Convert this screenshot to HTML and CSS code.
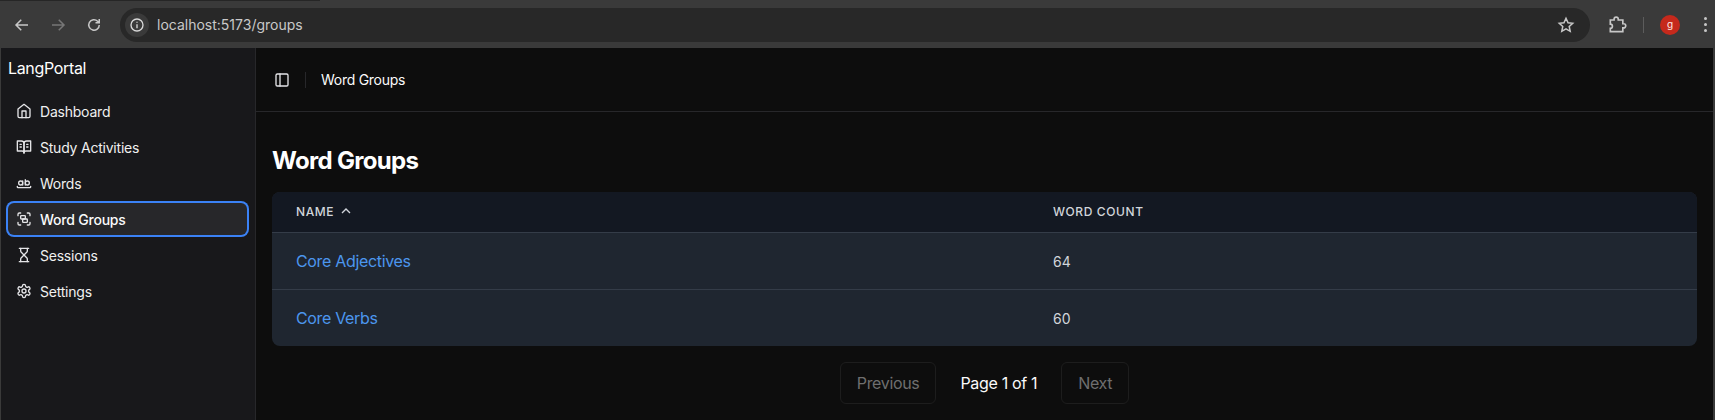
FILE: index.html
```html
<!DOCTYPE html>
<html lang="en">
<head>
    <meta charset="UTF-8">
    <meta name="viewport" content="width=device-width, initial-scale=1.0">
    <title>LangPortal - Word Groups</title>
    <link rel="stylesheet" href="styles.css">
</head>
<body>
    <div class="tab-edge"></div>
    <div class="toolbar">
        <svg class="tool-icon" viewBox="0 0 24 24"><path d="M20 12H5M11 5l-7 7 7 7"/></svg>
        <svg class="tool-icon tool-off" viewBox="0 0 24 24"><path d="M4 12h15M13 5l7 7-7 7"/></svg>
        <svg class="tool-icon" viewBox="0 0 24 24"><path d="M19 12a7 7 0 1 1-2.2-5.1L19 9M19 4v5h-5"/></svg>
        <div class="address">
            <span class="site-info">
                <svg viewBox="0 0 24 24"><circle cx="12" cy="12" r="9"/><path d="M12 11v6M12 7v1.5"/></svg>
            </span>
            <span class="url">localhost:5173/groups</span>
            <svg class="star" viewBox="0 0 24 24"><path d="M12 3l2.7 6 6.3.7-4.7 4.3 1.3 6.5L12 17.200 6.400 20.500 7.700 14 3 9.700 9.300 9z"/></svg>
        </div>
        <svg class="ext" viewBox="0 0 24 24"><path d="M4 6h4.500V5a2.500 2.500 0 0 1 5 0v1H19v4.500h1a2.500 2.500 0 0 1 0 5h-1V20H4v-4a2.500 2.500 0 0 0 0-5z"/></svg>
        <span class="tool-divider"></span>
        <span class="avatar">g</span>
        <span class="kebab"><i></i><i></i><i></i></span>
    </div>

    <div class="app">
        <aside class="sidebar">
            <div class="brand">LangPortal</div>
            <nav class="nav">
                <a class="nav-item">
                    <svg class="icon" viewBox="0 0 24 24"><path d="m3 9 9-7 9 7v11a2 2 0 0 1-2 2H5a2 2 0 0 1-2-2z"/><path d="M9 22V12h6v10"/></svg>
                    Dashboard
                </a>
                <a class="nav-item">
                    <svg class="icon" viewBox="0 0 24 24"><path d="M2 3h6a4 4 0 0 1 4 4v14a3 3 0 0 0-3-3H2z"/><path d="M22 3h-6a4 4 0 0 0-4 4v14a3 3 0 0 1 3-3h7z"/><path d="M6 8h2M6 12h2M16 8h2M16 12h2"/></svg>
                    Study Activities
                </a>
                <a class="nav-item">
                    <svg class="icon" viewBox="0 0 24 24"><circle cx="7" cy="12" r="3"/><path d="M10 9v6"/><circle cx="17" cy="12" r="3"/><path d="M14 7v8"/><path d="M22 17v1c0 .5-.5 1-1 1H3c-.5 0-1-.5-1-1v-1"/></svg>
                    Words
                </a>
                <a class="nav-item active">
                    <svg class="icon" viewBox="0 0 24 24"><path d="M3 7V5c0-1.100.9-2 2-2h2M17 3h2c1.100 0 2 .9 2 2v2M21 17v2c0 1.100-.9 2-2 2h-2M7 21H5c-1.100 0-2-.9-2-2v-2"/><rect width="7" height="5" x="7" y="7" rx="1"/><rect width="7" height="5" x="10" y="12" rx="1"/></svg>
                    Word Groups
                </a>
                <a class="nav-item">
                    <svg class="icon" viewBox="0 0 24 24"><path d="M5 22h14M5 2h14"/><path d="M17 22v-4.172a2 2 0 0 0-.586-1.414L12 12l-4.414 4.414A2 2 0 0 0 7 17.828V22"/><path d="M7 2v4.172a2 2 0 0 0 .586 1.414L12 12l4.414-4.414A2 2 0 0 0 17 6.172V2"/></svg>
                    Sessions
                </a>
                <a class="nav-item">
                    <svg class="icon" viewBox="0 0 24 24"><path d="M12.220 2h-.44a2 2 0 0 0-2 2v.18a2 2 0 0 1-1 1.730l-.43.25a2 2 0 0 1-2 0l-.15-.08a2 2 0 0 0-2.730.73l-.22.38a2 2 0 0 0 .73 2.730l.15.1a2 2 0 0 1 1 1.720v.51a2 2 0 0 1-1 1.740l-.15.09a2 2 0 0 0-.73 2.730l.22.38a2 2 0 0 0 2.730.73l.15-.08a2 2 0 0 1 2 0l.43.25a2 2 0 0 1 1 1.730V20a2 2 0 0 0 2 2h.44a2 2 0 0 0 2-2v-.18a2 2 0 0 1 1-1.730l.43-.25a2 2 0 0 1 2 0l.15.08a2 2 0 0 0 2.730-.73l.22-.39a2 2 0 0 0-.73-2.730l-.15-.08a2 2 0 0 1-1-1.740v-.5a2 2 0 0 1 1-1.740l.15-.09a2 2 0 0 0 .73-2.730l-.22-.38a2 2 0 0 0-2.730-.73l-.15.08a2 2 0 0 1-2 0l-.43-.25a2 2 0 0 1-1-1.730V4a2 2 0 0 0-2-2z"/><circle cx="12" cy="12" r="3"/></svg>
                    Settings
                </a>
            </nav>
        </aside>

        <div class="content">
            <header class="topbar">
                <svg class="icon" viewBox="0 0 24 24"><rect width="18" height="18" x="3" y="3" rx="2"/><path d="M9 3v18"/></svg>
                <span class="topbar-sep"></span>
                <span class="crumb">Word Groups</span>
            </header>
            <main class="main">
                <h1>Word Groups</h1>
                <div class="table-wrap">
                    <table>
                        <thead>
                            <tr>
                                <th class="col-name">
                                    <span class="th-inner">Name
                                        <svg viewBox="0 0 24 24"><path d="m18 15-6-6-6 6"/></svg>
                                    </span>
                                </th>
                                <th>Word Count</th>
                            </tr>
                        </thead>
                        <tbody>
                            <tr>
                                <td><a class="group-link">Core Adjectives</a></td>
                                <td>64</td>
                            </tr>
                            <tr>
                                <td><a class="group-link">Core Verbs</a></td>
                                <td>60</td>
                            </tr>
                        </tbody>
                    </table>
                </div>
                <div class="pager">
                    <button disabled>Previous</button>
                    <span class="page-label">Page 1 of 1</span>
                    <button disabled>Next</button>
                </div>
            </main>
        </div>
    </div>
</body>
</html>
```

FILE: styles.css
```css
* { box-sizing: border-box; }
html, body { height: 100%; }
body {
    margin: 0;
    overflow: hidden;
    font-family: Inter, "Noto Sans", sans-serif;
    background: #3a3a3a;
    color: #fff;
    -webkit-font-smoothing: antialiased;
}

/* browser chrome */
.tab-edge {
    height: 1px;
    width: 320px;
    background: #262626;
}
.toolbar {
    height: 47px;
    display: flex;
    align-items: center;
    padding: 0 0 0 13px;
    background: #3a3a3a;
}
.tool-icon {
    width: 18px;
    height: 18px;
    margin-right: 18px;
    fill: none;
    stroke: #c7c7c7;
    stroke-width: 2;
}
.tool-off { stroke: #777; }
.address {
    width: 1470px;
    height: 34px;
    margin-left: -1px;
    padding: 0 15px 0 5px;
    display: flex;
    align-items: center;
    background: #282828;
    border-radius: 17px;
}
.site-info {
    width: 24px;
    height: 24px;
    display: flex;
    align-items: center;
    justify-content: center;
    background: #3a3a3a;
    border-radius: 50%;
}
.site-info svg {
    width: 16px;
    height: 16px;
    fill: none;
    stroke: #d8d8d8;
    stroke-width: 2;
}
.url {
    margin-left: 8px;
    flex: 1;
    font-size: 14px;
    color: #c9c9c9;
}
.star {
    width: 18px;
    height: 18px;
    fill: none;
    stroke: #c7c7c7;
    stroke-width: 2;
}
.ext {
    width: 20px;
    height: 20px;
    margin-left: 17px;
    fill: none;
    stroke: #c7c7c7;
    stroke-width: 2;
}
.tool-divider {
    width: 1px;
    height: 16px;
    margin-left: 16px;
    background: #5c5c5c;
}
.avatar {
    width: 20px;
    height: 20px;
    margin-left: 16px;
    border-radius: 50%;
    background: #c5291c;
    color: #ffe9e4;
    font-size: 10px;
    line-height: 18px;
    text-align: center;
}
.kebab {
    margin-left: 24px;
    display: flex;
    flex-direction: column;
    gap: 3px;
}
.kebab i {
    width: 3px;
    height: 3px;
    border-radius: 50%;
    background: #c7c7c7;
}

/* app shell */
.app {
    height: 372px;
    margin: 0 2px 0 1px;
    display: flex;
    overflow: hidden;
    background: #0d0d0d;
}
.sidebar {
    width: 255px;
    flex-shrink: 0;
    padding: 8px 8px 8px 7px;
    background: #18181b;
    border-right: 1px solid #27272a;
}
.brand {
    font-size: 16px;
    line-height: 24px;
    font-weight: 400;
    letter-spacing: -0.33px;
}
.nav {
    margin-top: 15px;
    display: flex;
    flex-direction: column;
    gap: 4px;
}
.nav-item {
    height: 32px;
    padding-left: 8px;
    display: flex;
    align-items: center;
    gap: 8px;
    font-size: 14px;
    letter-spacing: -0.22px;
    color: #f0f0f0;
    border-radius: 6px;
}
.nav-item.active {
    background: #27272a;
    font-weight: 500;
    color: #fafafa;
    box-shadow: 0 0 0 2px #3b82f6;
}
.icon {
    width: 16px;
    height: 16px;
    flex-shrink: 0;
    fill: none;
    stroke: #e4e4e7;
    stroke-width: 2;
    stroke-linecap: round;
    stroke-linejoin: round;
}

/* main column */
.content {
    flex: 1;
    min-width: 0;
}
.topbar {
    height: 64px;
    padding-left: 18px;
    display: flex;
    align-items: center;
    border-bottom: 1px solid #27272a;
}
.topbar-sep {
    width: 1px;
    height: 16px;
    margin: 0 15px 0 15px;
    background: #27272a;
}
.crumb {
    font-size: 14px;
    letter-spacing: -0.27px;
    color: #fafafa;
}
.main { padding: 33px 16px 0; }
h1 {
    margin: 0 0 15px;
    font-size: 24px;
    line-height: 32px;
    font-weight: 700;
    letter-spacing: -0.7px;
}
.table-wrap {
    border-radius: 8px;
    overflow: hidden;
    background: #1f2630;
}
table {
    width: 100%;
    table-layout: fixed;
    border-collapse: separate;
    border-spacing: 0;
}
th {
    height: 41px;
    padding: 0 24px 2px;
    text-align: left;
    font-size: 12px;
    font-weight: 500;
    letter-spacing: 0.05em;
    text-transform: uppercase;
    color: #d1d5db;
    background: #131822;
    border-bottom: 1px solid #343c48;
}
.col-name { width: 757px; }
.th-inner {
    display: flex;
    align-items: center;
    gap: 4px;
}
.th-inner svg {
    width: 16px;
    height: 16px;
    fill: none;
    stroke: #d1d5db;
    stroke-width: 2;
}
td {
    height: 56px;
    padding: 0 24px;
    font-size: 14px;
    color: #d1d5db;
}
tbody tr:first-child td {
    height: 57px;
    border-bottom: 1px solid #343c48;
}
.group-link {
    font-size: 16px;
    letter-spacing: -0.33px;
    color: #4c96ee;
}
.pager {
    margin-top: 16px;
    display: flex;
    justify-content: center;
    align-items: center;
    gap: 24px;
}
.pager button {
    height: 42px;
    padding: 0 16px;
    font: inherit;
    font-size: 16px;
    letter-spacing: -0.33px;
    color: #6f6f6f;
    background: transparent;
    border: 1px solid #1d1d1d;
    border-radius: 6px;
}
.page-label {
    font-size: 16px;
    letter-spacing: -0.33px;
    color: #fafafa;
}
```
